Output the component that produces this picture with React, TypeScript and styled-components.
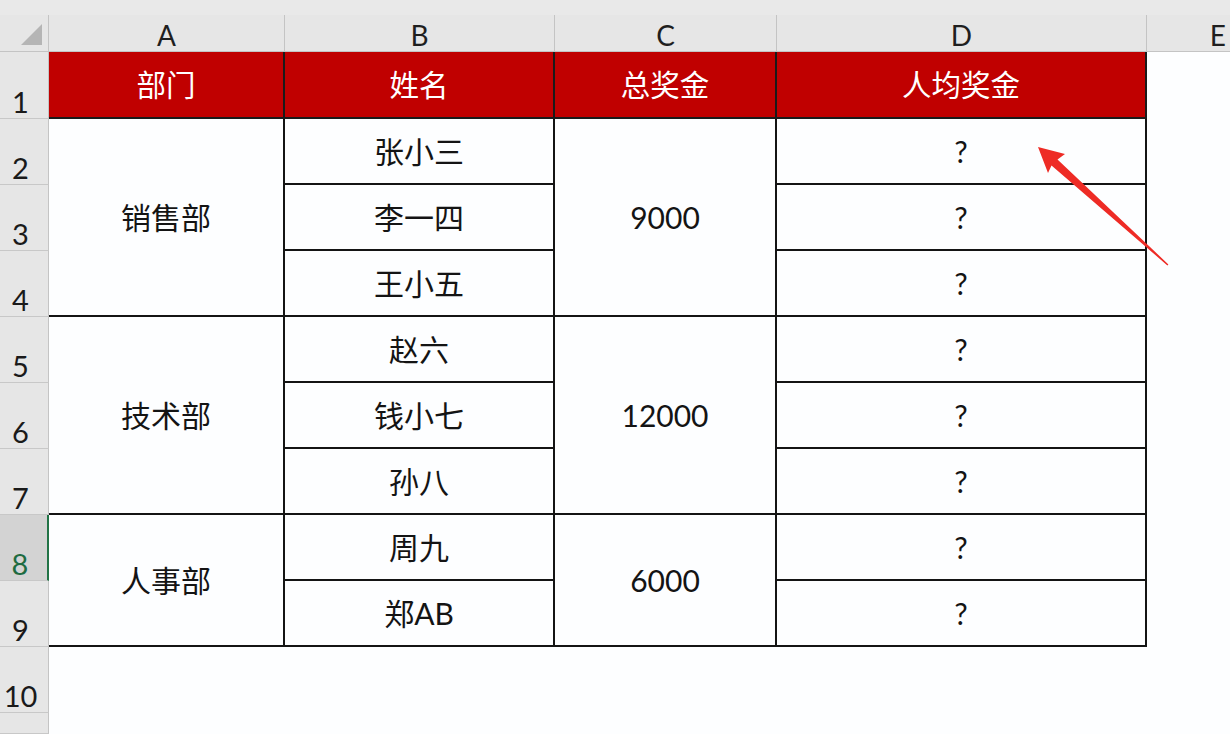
import React from "react";
import styled, { createGlobalStyle } from "styled-components";

const GlobalStyle = createGlobalStyle`
  html, body { margin: 0; padding: 0; background: #fdfeff; overflow: hidden; }
  * { box-sizing: border-box; }
`;

const FONT = `Lato, "Noto Sans CJK SC", sans-serif`;

const Sheet = styled.div`
  position: relative;
  width: 1230px;
  height: 734px;
  display: grid;
  grid-template-columns: 49px 236px 270px 222px 370px 1fr;
  grid-template-rows: 15px 37px 67px repeat(9, 66px) 1fr;
  background: #fdfeff;
  font-family: ${FONT};
  overflow: hidden;
`;

const TopBand = styled.div`
  grid-column: 1 / -1;
  grid-row: 1;
  background: #e9e9e9;
`;

const Corner = styled.div`
  grid-column: 1;
  grid-row: 2;
  background: #e6e6e6;
  border-right: 1px solid #c4c4c4;
  border-bottom: 1px solid #c4c4c4;
  display: flex;
  align-items: flex-end;
  justify-content: flex-end;
  padding: 0 6px 6px 0;
`;

const ColHead = styled.div<{ $col: number }>`
  grid-column: ${(p) => p.$col};
  grid-row: 2;
  background: #e6e6e6;
  border-right: ${(p) => (p.$col === 6 ? "none" : "1px solid #c4c4c4")};
  border-bottom: 1px solid #c4c4c4;
  display: flex;
  align-items: center;
  justify-content: ${(p) => (p.$col === 6 ? "flex-end" : "center")};
  padding: 4px ${(p) => (p.$col === 6 ? "4px" : "0")} 0 0;
  font-size: 28px;
  color: #1f1f1f;
  line-height: 1;
`;

const RowHead = styled.div<{ $row: number; $selected?: boolean }>`
  grid-column: 1;
  grid-row: ${(p) => p.$row};
  background: ${(p) => (p.$selected ? "#d3d3d3" : "#e6e6e6")};
  color: ${(p) => (p.$selected ? "#1e6b41" : "#1a1a1a")};
  border-right: ${(p) => (p.$selected ? "2px solid #217346" : "1px solid #c4c4c4")};
  border-bottom: 1px solid #c8c8c8;
  display: flex;
  align-items: flex-end;
  justify-content: center;
  padding: 0 7px 2px 0;
  font-size: 29px;
  line-height: 1;
`;

const HeadCell = styled.div<{ $col: number }>`
  grid-column: ${(p) => p.$col};
  grid-row: 3;
  background: #c00000;
  color: #ffffff;
  border-right: 2px solid #1a1a1a;
  border-bottom: 2px solid #1a1a1a;
  display: flex;
  align-items: center;
  justify-content: center;
  font-size: 29.5px;
  line-height: 1;
`;

const Cell = styled.div<{ $col: number; $row: number; $span?: number }>`
  grid-column: ${(p) => p.$col};
  grid-row: ${(p) => p.$row} / span ${(p) => p.$span ?? 1};
  background: #fdfeff;
  color: #141414;
  border-right: 2px solid #141414;
  border-bottom: 2px solid #141414;
  display: flex;
  align-items: center;
  justify-content: center;
  font-size: 30px;
  line-height: 1;
`;

const Arrow = styled.svg`
  position: absolute;
  left: 0;
  top: 0;
  width: 1230px;
  height: 734px;
  pointer-events: none;
`;

const groups = [
  { dept: "销售部", total: "9000", names: ["张小三", "李一四", "王小五"] },
  { dept: "技术部", total: "12000", names: ["赵六", "钱小七", "孙八"] },
  { dept: "人事部", total: "6000", names: ["周九", "郑AB"] },
];

const letters = ["A", "B", "C", "D", "E"];
const headers = ["部门", "姓名", "总奖金", "人均奖金"];

export default function App() {
  let rowCursor = 4;
  const body: React.ReactNode[] = [];
  groups.forEach((g, gi) => {
    const start = rowCursor;
    body.push(
      <Cell key={`d${gi}`} $col={2} $row={start} $span={g.names.length}>
        {g.dept}
      </Cell>
    );
    body.push(
      <Cell key={`t${gi}`} $col={4} $row={start} $span={g.names.length}>
        {g.total}
      </Cell>
    );
    g.names.forEach((n, ni) => {
      body.push(
        <Cell key={`n${gi}-${ni}`} $col={3} $row={start + ni}>
          {n}
        </Cell>
      );
      body.push(
        <Cell key={`q${gi}-${ni}`} $col={5} $row={start + ni}>
          ?
        </Cell>
      );
    });
    rowCursor += g.names.length;
  });

  return (
    <>
      <GlobalStyle />
      <Sheet>
        <TopBand />
        <Corner>
          <svg width="21" height="21" viewBox="0 0 21 21">
            <polygon points="21,0 21,21 0,21" fill="#b5b5b5" />
          </svg>
        </Corner>
        {letters.map((l, i) => (
          <ColHead key={l} $col={i + 2}>
            {l}
          </ColHead>
        ))}
        {Array.from({ length: 11 }, (_, i) => (
          <RowHead key={i} $row={i + 3} $selected={i === 7}>
            {i < 10 ? i + 1 : ""}
          </RowHead>
        ))}
        {headers.map((h, i) => (
          <HeadCell key={h} $col={i + 2}>
            {h}
          </HeadCell>
        ))}
        {body}
        <Arrow viewBox="0 0 1230 734">
          <polygon
            points="1038,147 1065,154 1057.5,159.5 1168.4,264.4 1167.4,265.4 1051.5,165.5 1048,173"
            fill="#ee2b25"
          />
        </Arrow>
      </Sheet>
    </>
  );
}
